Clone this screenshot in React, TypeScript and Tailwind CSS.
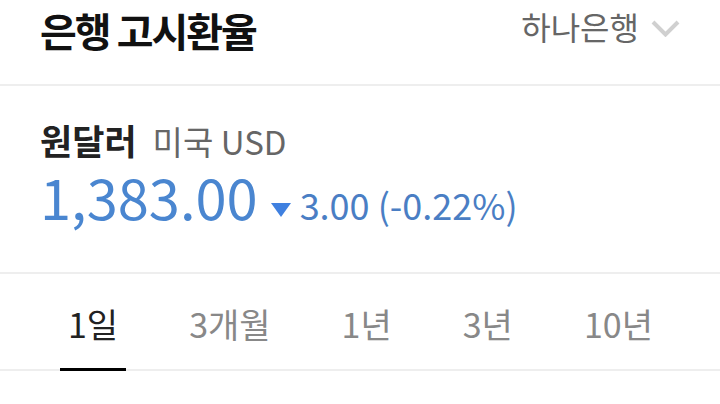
const TABS = ["1일", "3개월", "1년", "3년", "10년"];

export default function App() {
  return (
    <div
      className="h-[404px] w-[720px] overflow-hidden bg-white"
      style={{ fontFamily: '"Noto Sans CJK KR", "Noto Sans", sans-serif' }}
    >
      {/* Header */}
      <div className="flex h-[86px] items-start justify-between border-b-2 border-[#eeeeee] px-[40px]">
        <h1 className="mt-[2px] text-[40px] font-bold leading-[56px] tracking-[-2px] text-[#111]">은행 고시환율</h1>
        <button className="mt-[4px] flex items-center gap-[12px] text-[32px] leading-[44px] text-[#666]">
          하나은행
          <svg className="translate-y-[2px]" width="29" height="17" viewBox="0 0 29 17" fill="none">
            <path d="M2 2l12.5 12.5L27 2" stroke="#d0d0d0" strokeWidth="4" />
          </svg>
        </button>
      </div>

      {/* Rate */}
      <div className="flex h-[188px] flex-col border-b-2 border-[#eeeeee] px-[40px] pt-[34px]">
        <div className="flex items-baseline gap-[16px]">
          <span className="text-[35px] font-bold leading-[40px] text-[#222]">원달러</span>
          <span className="text-[33px] leading-[40px] text-[#666]">미국 USD</span>
        </div>
        <div className="mt-[7px] flex items-baseline">
          <span className="text-[56px] leading-[56px] text-[#4a86d0]">1,383.00</span>
          <svg className="ml-[13px] mr-[9px] self-center translate-y-[13px]" width="20" height="14" viewBox="0 0 20 14">
            <path d="M0 0h20L10 14z" fill="#3f80e0" />
          </svg>
          <span className="text-[36px] leading-[44px] text-[#4a7ec4]">3.00 (-0.22%)</span>
        </div>
      </div>

      {/* Tabs */}
      <div className="flex gap-[55px] border-b-2 border-[#eeeeee] pl-[60px]">
        {TABS.map((t, i) => (
          <div
            key={t}
            className={
              i === 0
                ? "-mb-[2px] border-b-[3px] border-black px-[8px] pb-[20px] pt-[26px] text-[34px] leading-[48px] text-[#222]"
                : "px-[8px] pb-[20px] pt-[26px] text-[34px] leading-[48px] text-[#888]"
            }
          >
            {t}
          </div>
        ))}
      </div>
    </div>
  );
}
